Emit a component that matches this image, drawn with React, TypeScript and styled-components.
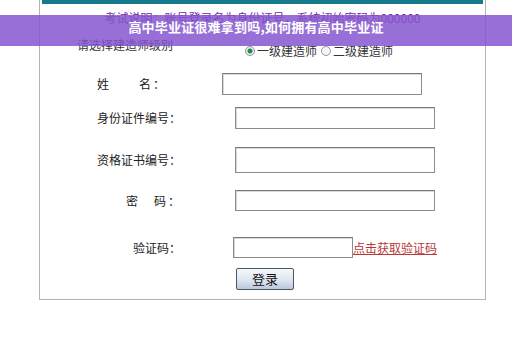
import React from "react";
import styled, { createGlobalStyle } from "styled-components";

const Global = createGlobalStyle`
  html, body { margin: 0; padding: 0; background: #ffffff; }
  body { font-family: "Noto Sans CJK SC", "Noto Sans", sans-serif; width: 512px; height: 340px; overflow: hidden; }
`;

const Page = styled.div`
  position: relative;
  width: 512px;
  height: 340px;
  background: #fff;
`;

const Panel = styled.div`
  margin-left: 39px;
  width: 445px;
  border: 1px solid #b4b4b4;
  border-top: none;
  padding-bottom: 9px;
  display: flex;
  flex-direction: column;
`;

const TealBar = styled.div`
  height: 4px;
  margin: 0 2px;
  background: #177a8c;
`;

const Hint = styled.div`
  padding-top: 6px;
  height: 30px;
  box-sizing: border-box;
  text-align: center;
  font-size: 12px;
  line-height: 16px;
  color: #7a2a9a;
`;

const LevelRow = styled.div`
  display: flex;
  align-items: flex-start;
  height: 24px;
  margin-top: 4px;
`;

const LevelLabel = styled.div`
  margin-left: 37px;
  font-size: 12px;
  line-height: 14px;
  color: #333;
  width: 168px;
`;

const Radios = styled.div`
  display: flex;
  align-items: center;
  gap: 4px;
  margin-top: 6px;
  font-size: 12px;
  line-height: 14px;
  color: #333;
`;

const RadioItem = styled.label`
  display: flex;
  align-items: center;
  gap: 2px;
`;

const RadioDot = styled.span<{ $on?: boolean }>`
  width: 10px;
  height: 10px;
  border-radius: 50%;
  border: 1px solid #8a9aa8;
  background: ${(p) => (p.$on ? "radial-gradient(circle, #2a8a4a 0 2px, #e8f0ec 3px)" : "#f4f6f8")};
  box-sizing: border-box;
`;

const Row = styled.div<{ $mt: number; $h: number }>`
  display: flex;
  align-items: center;
  height: ${(p) => p.$h}px;
  margin-top: ${(p) => p.$mt}px;
`;

const Label = styled.div<{ $end: number; $ls?: number }>`
  width: ${(p) => p.$end - 40}px;
  text-align: right;
  font-size: 12px;
  line-height: 16px;
  color: #222;
  letter-spacing: ${(p) => p.$ls ?? 0}px;
  white-space: nowrap;
`;

const Field = styled.div<{ $gap: number; $w: number }>`
  margin-left: ${(p) => p.$gap}px;
  width: ${(p) => p.$w}px;
  height: 100%;
  box-sizing: border-box;
  border: 1px solid #8c8c8c;
  border-top-color: #7a7a7a;
  box-shadow: inset 1px 1px 0 #d8d8d8;
  background: #fff;
`;

const CodeLink = styled.a`
  font-size: 12px;
  line-height: 16px;
  color: #b83838;
  text-decoration: underline;
  white-space: nowrap;
`;

const LoginButton = styled.button`
  margin-left: 196px;
  margin-top: 10px;
  width: 58px;
  height: 22px;
  padding: 0;
  border: 1px solid #4a5666;
  border-radius: 2px;
  background: linear-gradient(#f6f8fb, #dfe6f0 55%, #b9c8dc);
  font-family: "Noto Sans CJK SC", sans-serif;
  font-size: 13px;
  line-height: 18px;
  color: #111;
`;

const Banner = styled.div`
  position: absolute;
  left: 0;
  right: 0;
  top: 15px;
  height: 31px;
  padding-top: 4px;
  box-sizing: border-box;
  background: rgba(132, 84, 206, 0.84);
  color: #fff;
  text-align: center;
  font-size: 13px;
  font-weight: 700;
  line-height: 16px;
  letter-spacing: 0.2px;
`;

export default function App() {
  return (
    <Page>
      <Global />
      <Panel>
        <TealBar />
        <Hint>考试说明：账号登录名为身份证号，系统初始密码为000000</Hint>
        <LevelRow>
          <LevelLabel>请选择建造师级别</LevelLabel>
          <Radios>
            <RadioItem>
              <RadioDot $on />
              一级建造师
            </RadioItem>
            <RadioItem>
              <RadioDot />
              二级建造师
            </RadioItem>
          </Radios>
        </LevelRow>
        <Row $mt={11} $h={22}>
          <Label $end={167} $ls={2}>姓　　名：</Label>
          <Field $gap={55} $w={200} />
        </Row>
        <Row $mt={12} $h={22}>
          <Label $end={181}>身份证件编号：</Label>
          <Field $gap={54} $w={200} />
        </Row>
        <Row $mt={18} $h={26}>
          <Label $end={181}>资格证书编号：</Label>
          <Field $gap={54} $w={200} />
        </Row>
        <Row $mt={17} $h={21}>
          <Label $end={182} $ls={2}>密　码：</Label>
          <Field $gap={53} $w={200} />
        </Row>
        <Row $mt={26} $h={21}>
          <Label $end={181}>验证码：</Label>
          <Field $gap={52} $w={120} />
          <CodeLink>点击获取验证码</CodeLink>
        </Row>
        <LoginButton>登录</LoginButton>
      </Panel>
      <Banner>高中毕业证很难拿到吗,如何拥有高中毕业证</Banner>
    </Page>
  );
}
